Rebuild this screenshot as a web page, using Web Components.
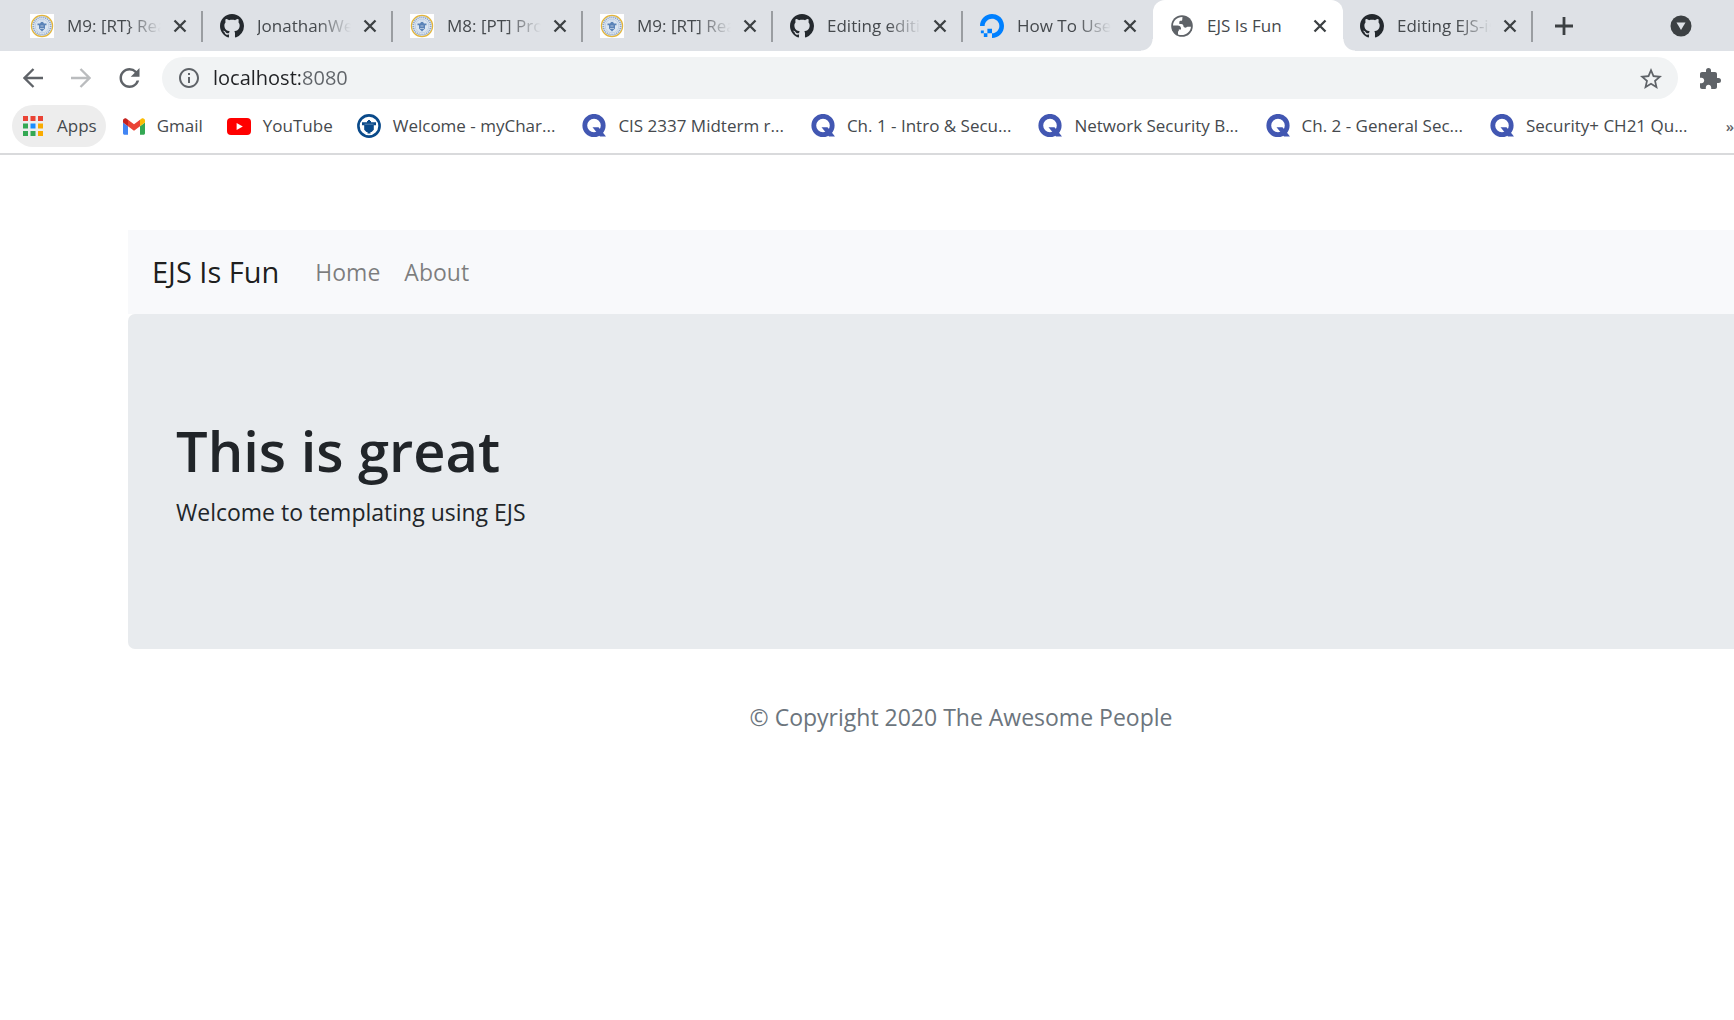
<!DOCTYPE html>
<html lang="en">
<head>
<meta charset="utf-8">
<title>EJS Is Fun</title>
<style>
html, body { margin: 0; height: 100%; }
body { font-family: "Open Sans", "Noto Sans", sans-serif; background: #fff; color: #212529; overflow: hidden; }
</style>
</head>
<body>
<browser-window>
  <tab-strip slot="tabs">
    <browser-tab icon="seal" fade>M9: [RT} Reading</browser-tab>
    <browser-tab icon="github" fade>JonathanWeb</browser-tab>
    <browser-tab icon="seal" fade>M8: [PT] Project</browser-tab>
    <browser-tab icon="seal" fade>M9: [RT] Reading</browser-tab>
    <browser-tab icon="github" fade>Editing editing</browser-tab>
    <browser-tab icon="ocean" fade>How To Use EJS</browser-tab>
    <browser-tab icon="globe" active>EJS Is Fun</browser-tab>
    <browser-tab icon="github" fade>Editing EJS-is</browser-tab>
  </tab-strip>
  <tool-bar slot="toolbar"></tool-bar>
  <bookmark-bar slot="bookmarks">
    <book-mark icon="apps" pill>Apps</book-mark>
    <book-mark icon="gmail">Gmail</book-mark>
    <book-mark icon="youtube">YouTube</book-mark>
    <book-mark icon="charger" long>Welcome - myChar...</book-mark>
    <book-mark icon="quizlet" long>CIS 2337 Midterm r...</book-mark>
    <book-mark icon="quizlet" long>Ch. 1 - Intro &amp; Secu...</book-mark>
    <book-mark icon="quizlet" long>Network Security B...</book-mark>
    <book-mark icon="quizlet" long>Ch. 2 - General Sec...</book-mark>
    <book-mark icon="quizlet" long>Security+ CH21 Qu...</book-mark>
  </bookmark-bar>
  <page-container>
    <nav-bar brand="EJS Is Fun">
      <nav-item>Home</nav-item>
      <nav-item>About</nav-item>
    </nav-bar>
    <jumbo-tron>
      <span slot="title">This is great</span>
      Welcome to templating using EJS
    </jumbo-tron>
    <page-footer>© Copyright 2020 The Awesome People</page-footer>
  </page-container>
</browser-window>
<script>
const ICONS = {
  seal: `<svg width="24" height="24" viewBox="0 0 24 24"><rect width="24" height="24" fill="#fff"/><circle cx="12" cy="12" r="10.6" fill="#e6ecf4" stroke="#e2b53c" stroke-width="1.2"/><circle cx="12" cy="12" r="8.7" fill="none" stroke="#8ba5ca" stroke-width="1.8" stroke-dasharray="1.2 .8"/><circle cx="12" cy="12" r="6.9" fill="#dbe5f1" stroke="#a9bdd8" stroke-width=".6"/><path d="M7.500 9.500h2.500l1-1.500h2l1 1.500h2.500v1.700h-1.500v3.300L12 17.600l-3-3.100v-3.300H7.500z" fill="#5b83b8"/><path d="M10 7h4M10.500 12h3M10 14.500h4" stroke="#c5d4e8" stroke-width=".8"/></svg>`,
  github: `<svg width="24" height="24" viewBox="0 0 16 16"><path fill="#24292e" fill-rule="evenodd" d="M8 0C3.58 0 0 3.58 0 8c0 3.54 2.29 6.53 5.47 7.59.4.07.55-.17.55-.38 0-.19-.01-.82-.01-1.49-2.01.37-2.53-.49-2.69-.94-.09-.23-.48-.94-.82-1.13-.28-.15-.68-.52-.01-.53.63-.01 1.08.58 1.23.82.72 1.21 1.87.87 2.33.66.07-.52.28-.87.51-1.07-1.78-.2-3.64-.89-3.64-3.95 0-.87.31-1.59.82-2.15-.08-.2-.36-1.02.08-2.12 0 0 .67-.21 2.2.82.64-.18 1.32-.27 2-.27s1.36.09 2 .27c1.53-1.04 2.2-.82 2.2-.82.44 1.1.16 1.92.08 2.12.51.56.82 1.27.82 2.15 0 3.07-1.87 3.75-3.65 3.95.29.25.54.73.54 1.48 0 1.07-.01 1.93-.01 2.2 0 .21.15.46.55.38A8.01 8.01 0 0 0 16 8c0-4.42-3.58-8-8-8z"/></svg>`,
  ocean: `<svg width="24" height="24" viewBox="0 0 24 24"><path fill="#0080ff" d="M12.04 0C5.408-.02.005 5.37.005 11.992h4.638c0-4.923 4.882-8.731 10.064-6.855a6.95 6.95 0 0 1 4.147 4.148c1.889 5.177-1.924 10.055-6.84 10.064v-4.61H7.391v4.623h4.61V24c7.86 0 13.967-7.588 11.397-15.83-1.115-3.59-3.985-6.446-7.575-7.575A12.8 12.8 0 0 0 12.039 0zM7.39 19.362H3.828v3.564H7.39zm-3.563 0V16.38H.85v2.982z"/></svg>`,
  globe: `<svg width="24" height="24" viewBox="0 0 24 24"><circle cx="12" cy="12" r="10.8" fill="#5f6368"/><path fill="#fff" d="M12.500 3.100C7 3 3.200 7 3 11.600h4.700c1.900 0 3.300 1.200 3.300 2.900v1H8.800v1.700H8v3.200c5.500 2.300 12.500-1.300 13-7.600h-3.600c-.9 1.200-3.600 1.200-3.900-.6-.2-1.500-.9-2.300-2.300-2.300H9.300V8.300c0-1.200.8-1.600 2-1.600.9 0 1-.7 1-1.500 0-.9.1-1.500.2-2.100z"/></svg>`,
  apps: `<svg width="20" height="20" viewBox="0 0 20 20"><path fill="#ea4335" d="M0 0h5v5H0zM7.500 0h5v5h-5zM15 0h5v5h-5z"/><path fill="#34a853" d="M0 7.500h5v5H0zM0 15h5v5H0zM7.500 15h5v5h-5z"/><path fill="#1a8cff" d="M7.500 7.500h5v5h-5z"/><path fill="#f9ab00" d="M15 7.500h5v5h-5zM15 15h5v5h-5z"/></svg>`,
  gmail: `<svg width="22" height="17" viewBox="52 42 88 66"><path fill="#4285f4" d="M58 108h14V74L52 59v43c0 3.320 2.690 6 6 6"/><path fill="#34a853" d="M120 108h14c3.320 0 6-2.690 6-6V59l-20 15"/><path fill="#fbbc04" d="M120 48v26l20-15v-8c0-7.420-8.470-11.650-14.400-7.200"/><path fill="#ea4335" d="M72 74V48l24 18 24-18v26L96 92"/><path fill="#c5221f" d="M52 51v8l20 15V48l-5.600-4.200c-5.940-4.450-14.400-.22-14.400 7.200"/></svg>`,
  youtube: `<svg width="24" height="17" viewBox="0 0 24 17"><rect width="24" height="17" rx="4" fill="#f00"/><path d="M9.600 5v7l6.200-3.500z" fill="#fff"/></svg>`,
  charger: `<svg width="24" height="24" viewBox="0 0 24 24"><circle cx="12" cy="12" r="10.600" fill="#fff" stroke="#0a4a8a" stroke-width="2.600"/><path fill="#0a4a8a" d="M5 8.200h5V7h1V6h2v1h1v1.200h5v3h-2.200v4.600L14.600 18h-5.200l-2.200-2.200v-4.600H5zM10.500 18h3v1.500h-3z"/><path d="M7.500 10.200h9" stroke="#7d9fc4" stroke-width=".7"/></svg>`,
  quizlet: `<svg width="24" height="24" viewBox="0 0 24 24"><circle cx="12" cy="11.500" r="9.200" fill="none" stroke="#4257b2" stroke-width="4.800"/><path fill="#4257b2" d="M10.500 13.200h6l7.500 9.400h-6z"/></svg>`,
  close: `<svg width="14" height="14" viewBox="0 0 14 14"><path d="M1.500 1.500l11 11M12.500 1.500l-11 11" stroke="#3c4043" stroke-width="2.300"/></svg>`,
  plus: `<svg width="18" height="18" viewBox="0 0 18 18"><path d="M9 0v18M0 9h18" stroke="#3c4043" stroke-width="2.800"/></svg>`,
  search: `<svg width="22" height="22" viewBox="0 0 22 22"><circle cx="11" cy="11" r="10.500" fill="#3c4043"/><path d="M6.500 7.500h9L11 15z" fill="#dee1e6"/></svg>`,
  back: `<svg width="20" height="20" viewBox="0 0 20 20"><path d="M20 10H2M10.500 1L1.500 10l9 9" fill="none" stroke="currentColor" stroke-width="2.300"/></svg>`,
  forward: `<svg width="20" height="20" viewBox="0 0 20 20"><path d="M0 10h18M9.500 1l9 9-9 9" fill="none" stroke="currentColor" stroke-width="2.300"/></svg>`,
  reload: `<svg width="21" height="20" viewBox="4 4 16 16"><path fill="currentColor" d="M17.650 6.350A7.958 7.958 0 0 0 12 4c-4.420 0-7.990 3.580-7.990 8s3.570 8 7.990 8c3.730 0 6.840-2.550 7.730-6h-2.080A5.990 5.990 0 0 1 12 18c-3.310 0-6-2.690-6-6s2.690-6 6-6c1.660 0 3.140.69 4.220 1.780L13 11h7V4l-2.350 2.350z"/></svg>`,
  info: `<svg width="20" height="20" viewBox="2 2 20 20"><path fill="#5f6368" d="M11 7h2v2h-2zm0 4h2v6h-2zm1-9C6.480 2 2 6.480 2 12s4.480 10 10 10 10-4.480 10-10S17.520 2 12 2zm0 18c-4.410 0-8-3.590-8-8s3.590-8 8-8 8 3.590 8 8-3.590 8-8 8z"/></svg>`,
  star: `<svg width="22" height="21" viewBox="2 2 20 19"><path fill="#5f6368" d="M22 9.240l-7.190-.62L12 2 9.190 8.630 2 9.240l5.460 4.730L5.820 21 12 17.270 18.180 21l-1.630-7.030L22 9.240zM12 15.400l-3.760 2.270 1-4.280-3.320-2.880 4.380-.38L12 6.100l1.710 4.040 4.380.38-3.320 2.880 1 4.280L12 15.400z"/></svg>`,
  puzzle: `<svg width="21" height="21" viewBox="2 1 21 21"><path fill="#5f6368" d="M20.500 11H19V7c0-1.100-.9-2-2-2h-4V3.500a2.500 2.500 0 0 0-5 0V5H4c-1.100 0-1.990.9-1.990 2v3.800H3.500c1.490 0 2.700 1.210 2.700 2.700s-1.210 2.700-2.700 2.700H2V20c0 1.100.9 2 2 2h3.800v-1.500c0-1.490 1.210-2.700 2.700-2.700s2.700 1.210 2.700 2.700V22H17c1.100 0 2-.9 2-2v-4h1.500a2.500 2.500 0 0 0 0-5z"/></svg>`
};
const RESET = `<style>
:host, *, *::before, *::after { box-sizing: border-box; }
button { font: inherit; color: inherit; border: 0; background: none; padding: 0; margin: 0; display: flex; align-items: center; justify-content: center; }
a { color: inherit; text-decoration: none; }
svg { display: block; flex: none; }
</style>`;
const define = (name, render) => customElements.define(name, class extends HTMLElement {
  constructor() { super(); this.attachShadow({ mode: "open" }); }
  connectedCallback() { this.shadowRoot.innerHTML = RESET + render(this); }
});

define("browser-window", () => `<style>
:host { display: flex; flex-direction: column; min-height: 100vh; overflow: hidden; }
header { flex: none; }
main { flex: 1; }
</style><header><slot name="tabs"></slot><slot name="toolbar"></slot><slot name="bookmarks"></slot></header><main><slot></slot></main>`);

define("tab-strip", () => `<style>
:host { display: flex; align-items: stretch; height: 51px; padding-left: 13px; background: #dee1e6; }
.new { width: 34px; margin-left: 14px; }
.search { width: 34px; margin-left: auto; margin-right: 36px; }
</style><slot></slot><button class="new" aria-label="New tab">${ICONS.plus}</button><button class="search" aria-label="Search tabs">${ICONS.search}</button>`);

define("browser-tab", el => `<style>
:host { display: flex; align-items: center; flex: 0 1 190px; min-width: 0; padding: 0 16px 0 17px; position: relative; color: #45494d; font-size: 17px; line-height: 24px; }
:host::after { content: ""; position: absolute; right: 0; top: 11px; width: 2px; height: 31px; background: #9a9da1; }
:host([active]) { background: #fff; border-radius: 12px 12px 0 0; }
:host([active])::after { display: none; }
:host([icon="ocean"])::after { display: none; }
.foot { display: none; }
:host([active]) .foot { display: block; position: absolute; bottom: 0; width: 12px; height: 12px; }
.foot.l { left: -12px; background: radial-gradient(circle at 0 0, transparent 11px, #fff 12px); }
.foot.r { right: -12px; background: radial-gradient(circle at 100% 0, transparent 11px, #fff 12px); }
.title { flex: 1; min-width: 0; margin: 0 12px 0 13px; white-space: nowrap; overflow: hidden; }
:host([fade]) .title { -webkit-mask-image: linear-gradient(90deg, #000 calc(100% - 34px), transparent); mask-image: linear-gradient(90deg, #000 calc(100% - 34px), transparent); }
</style><i class="foot l"></i><i class="foot r"></i>${ICONS[el.getAttribute("icon")]}<span class="title"><slot></slot></span><button aria-label="Close tab">${ICONS.close}</button>`);

define("tool-bar", () => `<style>
:host { display: flex; align-items: center; height: 54px; padding: 0 13px 0 12px; background: #fff; color: #5f6368; }
.nav { width: 42px; height: 42px; margin-right: 6px; }
.off { color: #babcbe; }
.box { flex: 1; display: flex; align-items: center; height: 42px; margin: 0 22px 0 6px; padding: 0 16px 0 17px; border-radius: 21px; background: #f1f3f4; }
input { flex: 1; min-width: 0; margin-left: 14px; padding: 0; border: 0; outline: 0; height: 30px; font: 20px/30px "Open Sans", "Noto Sans", sans-serif; background: linear-gradient(90deg, #202124 87px, #5f6368 87px); -webkit-background-clip: text; background-clip: text; -webkit-text-fill-color: transparent; color: #202124; }
</style><button class="nav" aria-label="Back">${ICONS.back}</button><button class="nav off" aria-label="Forward">${ICONS.forward}</button><button class="nav" aria-label="Reload">${ICONS.reload}</button>
<div class="box"><button aria-label="Site information">${ICONS.info}</button><input aria-label="Address" value="localhost:8080" spellcheck="false"><button aria-label="Bookmark this page">${ICONS.star}</button></div>
<button aria-label="Extensions">${ICONS.puzzle}</button>`);

define("bookmark-bar", () => `<style>
:host { display: flex; align-items: center; height: 50px; padding: 0 0 6px 12px; border-bottom: 2px solid #d9dadc; background: #fff; }
.more { flex: none; margin-left: auto; font-size: 15px; font-weight: 600; line-height: 24px; color: #5f6368; }
</style><slot></slot><button class="more" aria-label="More bookmarks">»</button>`);

define("book-mark", el => `<style>
:host { display: block; flex: none; }
:host([long]) { margin-right: 3px; }
a { display: flex; align-items: center; height: 42px; gap: 12px; padding: 0 12px; border-radius: 21px; color: #45494d; font-size: 17px; line-height: 24px; white-space: nowrap; }
:host([pill]) a { background: #ededed; gap: 14px; padding: 0 9px 0 11px; margin-right: 5px; }
</style><a href="#">${ICONS[el.getAttribute("icon")]}<span><slot></slot></span></a>`);

define("page-container", () => `<style>
:host { display: block; margin: 75px -60px 0 128px; }
</style><slot></slot>`);

define("nav-bar", el => `<style>
:host { display: block; background: #f8f9fb; }
nav { display: flex; align-items: center; padding: 12px 24px; }
.brand { margin-right: 24px; font-size: 29px; line-height: 60px; color: rgba(0,0,0,.9); white-space: nowrap; }
.links { display: flex; }
</style><nav><a class="brand" href="#">${el.getAttribute("brand")}</a><div class="links"><slot></slot></div></nav>`);

define("nav-item", () => `<style>
:host { display: block; }
a { display: block; padding: 12px; font-size: 23px; line-height: 36px; color: rgba(0,0,0,.5); }
</style><a href="#"><slot></slot></a>`);

define("jumbo-tron", () => `<style>
:host { display: block; padding: 100px 48px 96px; border-radius: 7px; background: #e8ebee; }
h1 { margin: 0 0 8px; font-size: 56px; line-height: 72px; font-weight: 600; }
p { margin: 0 0 23px; font-size: 23px; line-height: 36px; }
</style><h1><slot name="title"></slot></h1><p><slot></slot></p>`);

define("page-footer", () => `<style>
:host { display: block; margin-top: 50px; }
p { margin: 0; text-align: center; font-size: 23px; line-height: 36px; color: #6c757d; }
</style><footer><p><slot></slot></p></footer>`);
</script>
</body>
</html>
